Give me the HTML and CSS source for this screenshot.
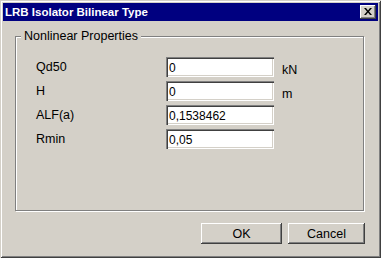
FILE: index.html
```html
<!DOCTYPE html>
<html lang="en">
<head>
  <meta charset="UTF-8">
  <title>LRB Isolator Bilinear Type</title>
  <link rel="stylesheet" href="styles.css">
</head>
<body>
  <div class="window">
    <div class="titlebar">
      <span class="title">LRB Isolator Bilinear Type</span>
      <button class="close-btn" aria-label="Close">
        <svg width="8" height="7" viewBox="0 0 8 7">
          <path d="M0 0h2l2 2.5L6 0h2L5 3.5 8 7H6L4 4.5 2 7H0l3-3.5z" fill="#000"/>
        </svg>
      </button>
    </div>
    <div class="content">
      <div class="group">
        <span class="legend">Nonlinear Properties</span>
        <div class="rows">
          <label class="label">Qd50</label>
          <input class="field" type="text" value="0">
          <span class="unit">kN</span>

          <label class="label">H</label>
          <input class="field" type="text" value="0">
          <span class="unit">m</span>

          <label class="label">ALF(a)</label>
          <input class="field" type="text" value="0,1538462">
          <span class="unit"></span>

          <label class="label">Rmin</label>
          <input class="field" type="text" value="0,05">
          <span class="unit"></span>
        </div>
      </div>
      <div class="buttons">
        <button class="btn btn-ok">OK</button>
        <button class="btn btn-cancel">Cancel</button>
      </div>
    </div>
  </div>
</body>
</html>
```

FILE: styles.css
```css
body {
  margin: 0;
  font-family: "Liberation Sans", Arial, sans-serif;
  font-size: 12px;
  color: #000;
  background: #d4d0c8;
}
.window {
  width: 381px;
  height: 258px;
  box-sizing: border-box;
  padding: 3px;
  background: #d4d0c8;
  box-shadow: inset 1px 1px 0 #d4d0c8, inset -1px -1px 0 #404040,
    inset 2px 2px 0 #fff, inset -2px -2px 0 #808080;
  display: flex;
  flex-direction: column;
}
.titlebar {
  height: 18px;
  background: #000080;
  display: flex;
  align-items: center;
  justify-content: space-between;
  padding: 0 2px 0 2px;
}
.title {
  color: #fff;
  font-weight: bold;
  font-size: 11.5px;
  line-height: 18px;
}
.close-btn {
  width: 16px;
  height: 14px;
  padding: 0;
  border: none;
  background: #d4d0c8;
  box-shadow: inset -1px -1px 0 #404040, inset 1px 1px 0 #fff,
    inset -2px -2px 0 #808080;
  display: flex;
  align-items: center;
  justify-content: center;
}
.close-btn svg {
  display: block;
  margin: 0 1px 1px 0;
}
.content {
  flex: 1;
  padding: 15px 0 0 12px;
}
.group {
  position: relative;
  width: 347px;
  height: 173px;
  border: 1px solid #808080;
  box-shadow: inset 1px 1px 0 #fff, 1px 1px 0 #fff;
}
.legend {
  position: absolute;
  left: 5px;
  top: -8px;
  padding: 0 3px 0 3px;
  background: #d4d0c8;
  line-height: 14px;
  font-size: 12.5px;
}
.rows {
  display: grid;
  grid-template-columns: 130px 108px auto;
  grid-auto-rows: 20px;
  row-gap: 4px;
  padding: 20px 0 0 20px;
}
.label {
  font-size: 12.5px;
  line-height: 20px;
}
.field {
  box-sizing: border-box;
  width: 108px;
  height: 20px;
  margin: 0;
  padding: 1px 2px 0 3px;
  border: none;
  background: #fff;
  font-family: "Liberation Sans", Arial, sans-serif;
  font-size: 12px;
  box-shadow: inset 1px 1px 0 #808080, inset 2px 2px 0 #404040,
    inset -1px -1px 0 #fff, inset -2px -2px 0 #d4d0c8;
  outline: none;
}
.unit {
  padding: 6px 0 0 8px;
  font-size: 12.5px;
  line-height: 14px;
}
.buttons {
  display: flex;
  gap: 6px;
  padding: 12px 0 0 186px;
}
.btn {
  height: 21px;
  padding: 0;
  border: none;
  background: #d4d0c8;
  font-family: "Liberation Sans", Arial, sans-serif;
  font-size: 12.5px;
  color: #000;
  box-shadow: inset -1px -1px 0 #404040, inset 1px 1px 0 #fff,
    inset -2px -2px 0 #808080;
}
.btn-ok {
  width: 81px;
}
.btn-cancel {
  width: 77px;
}
```
